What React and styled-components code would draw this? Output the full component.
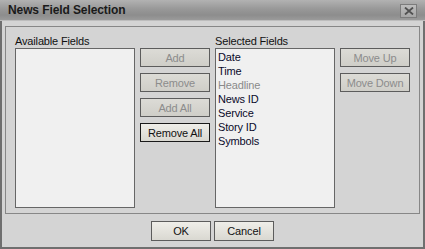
import React from "react";
import styled, { createGlobalStyle } from "styled-components";

const Global = createGlobalStyle`
  html, body { margin: 0; padding: 0; background: #d4d4d4; }
  body { font-family: "Liberation Sans", Arial, sans-serif; font-size: 11px; letter-spacing: -0.15px; }
`;

const Window = styled.div`
  width: 425px;
  height: 249px;
  box-sizing: border-box;
  border: 2px solid #6f6f6f;
  border-top: none;
  background: #d4d4d4;
  display: flex;
  flex-direction: column;
`;

const TitleBar = styled.div`
  height: 21px;
  margin: 0 -2px;
  padding: 0 8px;
  box-sizing: border-box;
  display: flex;
  align-items: center;
  justify-content: space-between;
  background: linear-gradient(#b2b2b2 0%, #989898 45%, #8d8d8d 75%, #9a9a9a 100%);
  border-bottom: 1px solid #bdbdbd;
`;

const Title = styled.span`
  font-family: "Liberation Sans", Arial, sans-serif;
  font-weight: bold;
  font-size: 12px;
  letter-spacing: -0.1px;
  color: #1a1a1a;
`;

const CloseBtn = styled.div`
  width: 17px;
  height: 14px;
  margin-right: 0px;
  margin-top: 1px;
  box-sizing: border-box;
  border: 1px solid #7c7c7c;
  background: linear-gradient(#bdbdbd, #a6a6a6);
  display: flex;
  align-items: center;
  justify-content: center;
`;

const Body = styled.div`
  flex: 1;
  padding: 5px 3px 0 3px;
  display: flex;
  flex-direction: column;
`;

const Group = styled.div`
  border: 1px solid #878787;
  padding: 7px 9px 5px 9px;
  display: flex;
  gap: 5px;
  align-items: flex-start;
`;

const ListColumn = styled.div`
  display: flex;
  flex-direction: column;
  width: 120px;
`;

const Label = styled.div`
  height: 14px;
  line-height: 14px;
  color: #111;
  white-space: nowrap;
`;

const ListBox = styled.div`
  height: 160px;
  box-sizing: border-box;
  border: 1px solid #666;
  background: #f0f0f0;
  padding: 1px 2px;
`;

const Item = styled.div`
  height: 14px;
  line-height: 14px;
  color: ${(p) => (p.$dim ? "#8a8a8a" : "#0a0a2a")};
  white-space: nowrap;
`;

const ButtonColumn = styled.div`
  display: flex;
  flex-direction: column;
  gap: 6px;
  margin-top: 14px;
`;

const Btn = styled.div`
  width: ${(p) => p.$w || 70}px;
  height: ${(p) => p.$h || 19}px;
  box-sizing: border-box;
  border: 1px solid ${(p) => (p.$default ? "#1a1a1a" : "#5c5c5c")};
  background: ${(p) =>
    p.$disabled
      ? "linear-gradient(#dcdbd6, #cfcec8)"
      : "linear-gradient(#efeee9, #d9d8d1)"};
  color: ${(p) => (p.$disabled ? "#8c8c8c" : "#111")};
  display: flex;
  align-items: center;
  justify-content: center;
  white-space: nowrap;
`;

const Footer = styled.div`
  display: flex;
  justify-content: center;
  gap: 3px;
  padding-top: 7px;
`;

const selected = ["Date", "Time", "Headline", "News ID", "Service", "Story ID", "Symbols"];

export default function App() {
  return (
    <>
      <Global />
      <Window>
        <TitleBar>
          <Title>News Field Selection</Title>
          <CloseBtn>
            <svg width="10" height="8" viewBox="0 0 10 8">
              <path d="M1 0.5 L9 7.5 M9 0.5 L1 7.5" stroke="#505050" strokeWidth="1.8" />
            </svg>
          </CloseBtn>
        </TitleBar>
        <Body>
          <Group>
            <ListColumn>
              <Label>Available Fields</Label>
              <ListBox />
            </ListColumn>
            <ButtonColumn>
              <Btn $disabled>Add</Btn>
              <Btn $disabled>Remove</Btn>
              <Btn $disabled>Add All</Btn>
              <Btn $default>Remove All</Btn>
            </ButtonColumn>
            <ListColumn>
              <Label>Selected Fields</Label>
              <ListBox>
                {selected.map((s) => (
                  <Item key={s} $dim={s === "Headline"}>
                    {s}
                  </Item>
                ))}
              </ListBox>
            </ListColumn>
            <ButtonColumn>
              <Btn $disabled>Move Up</Btn>
              <Btn $disabled>Move Down</Btn>
            </ButtonColumn>
          </Group>
          <Footer>
            <Btn $w={60} $h={20}>OK</Btn>
            <Btn $w={60} $h={20}>Cancel</Btn>
          </Footer>
        </Body>
      </Window>
    </>
  );
}
